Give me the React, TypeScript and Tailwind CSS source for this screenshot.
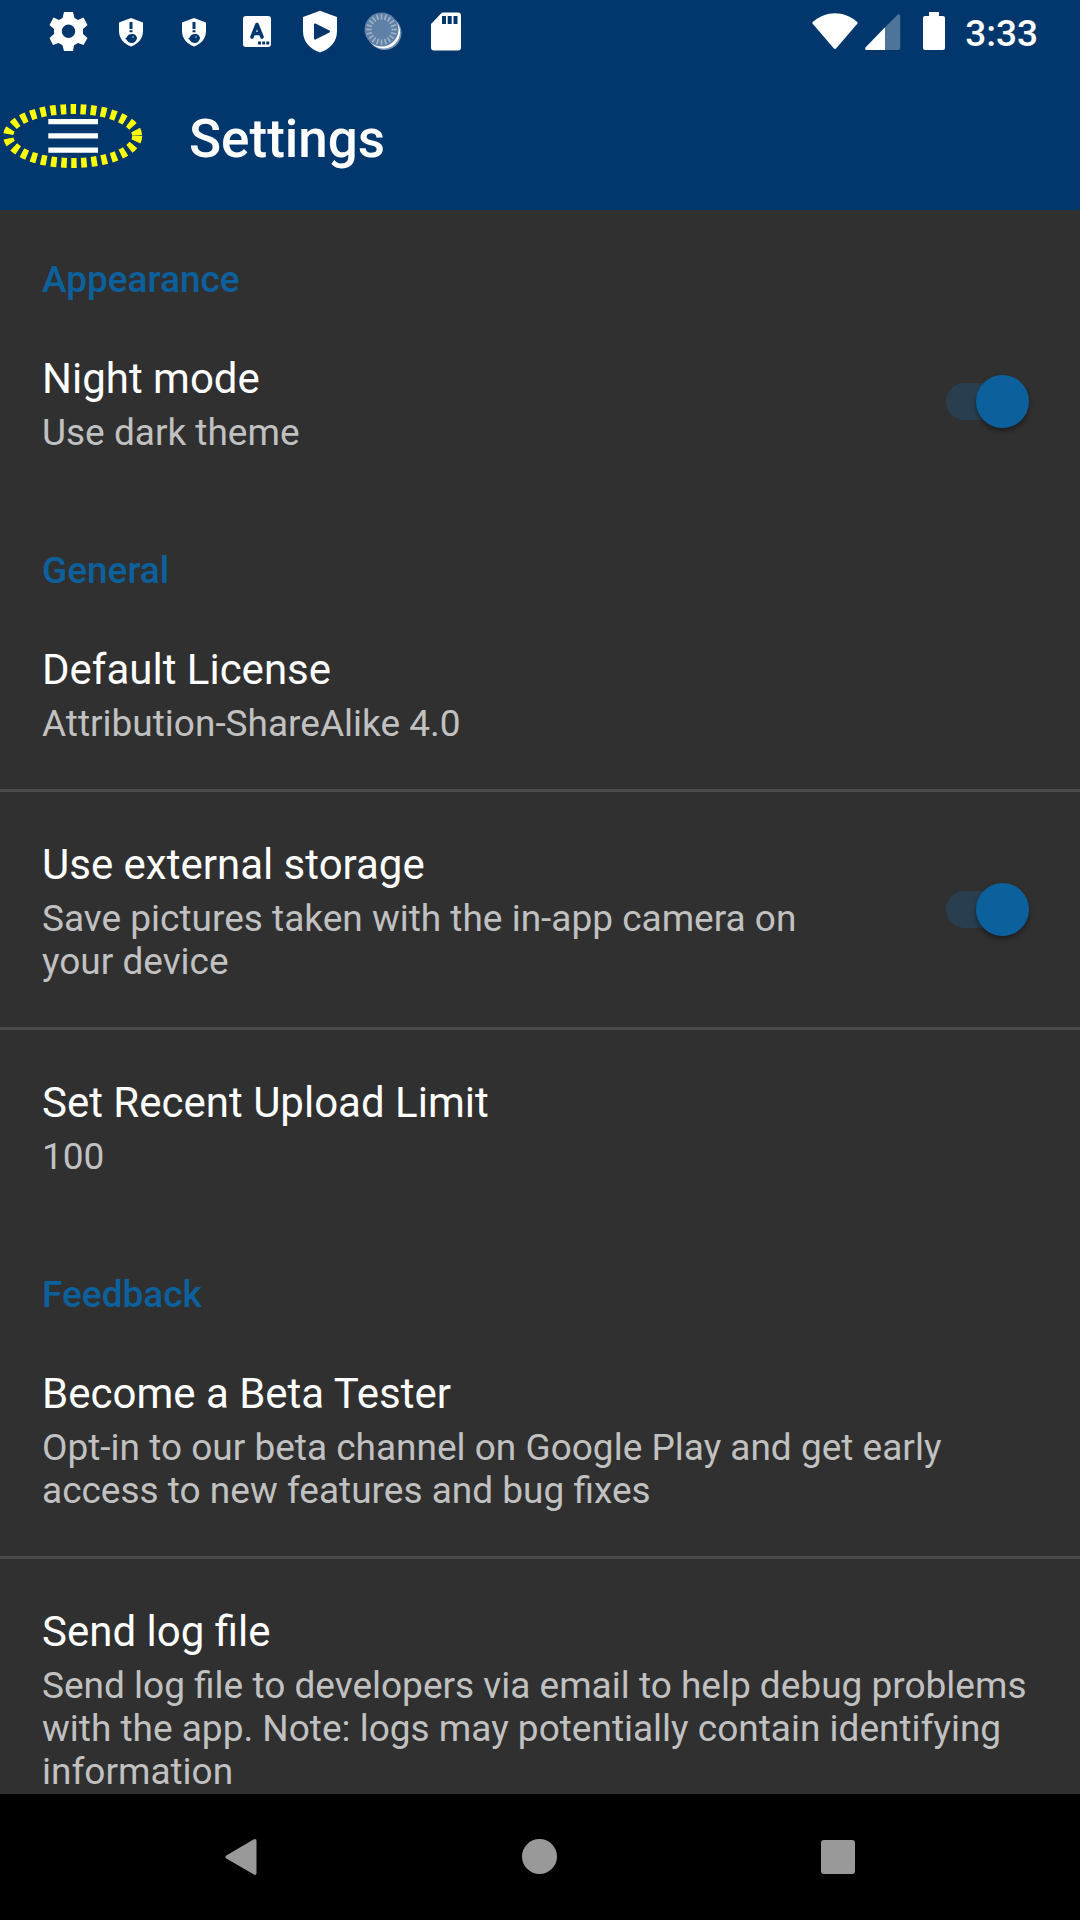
import React from "react";

function Toggle() {
  return (
    <div className="relative mb-[5px] flex h-[53px] w-[84px] shrink-0 items-center">
      <div className="h-[37px] w-[74px] rounded-full bg-[#293f50]" />
      <div className="absolute left-[30px] top-0 h-[53px] w-[53px] rounded-full bg-[#0c609c] shadow-[0_3px_5px_rgba(0,0,0,0.4)]" />
    </div>
  );
}

function Category({ children, first = false }: { children: string; first?: boolean }) {
  return (
    <h2 className={`${first ? "pt-[48px]" : "pt-[51px]"} text-[37px] font-medium leading-[43px] text-[#0c609c]`}>
      <span className="px-[42px]">{children}</span>
    </h2>
  );
}

type RowProps = { title: string; lines: string[]; divider?: boolean; toggle?: boolean };

function Row({ title, lines, divider = false, toggle = false }: RowProps) {
  return (
    <div className={`${divider ? "border-t-[3px] border-[#4a4a4a]" : ""} flex items-center justify-between pb-[44px] pl-[42px] pr-[50px] pt-[48px]`}>
      <div className="whitespace-nowrap">
        <div className="text-[42px] leading-[49px] text-white">{title}</div>
        <div className="mt-[8px] text-[37px] leading-[43px] text-[#c1c1c1]">
          {lines.map((line) => (
            <div key={line}>{line}</div>
          ))}
        </div>
      </div>
      {toggle && <Toggle />}
    </div>
  );
}

function ShieldAlert() {
  return (
    <svg className="h-[30px] w-[26px]" viewBox="0 0 26 30">
      <path fill="#fff" d="M13 1 25 5.5V14c0 7.500-5 13-12 15.500C6 27 1 21.500 1 14V5.500Z" />
      <path fill="#01376d" d="M11.500 5h3v7h-3zM11.500 13.300h3v2h-3zM7 22l1.500-1.500c1-2.500 3-3.500 5.500-3.500 3 0 5 2 5 4.500-1 3-3 4.500-5 4.500-2.500 0-4.500-1-5.500-3.500z" />
      <circle cx="15" cy="20" r=".7" fill="#fff" />
    </svg>
  );
}

function StatusBar() {
  const ticks = Array.from({ length: 20 }, (_, i) => i * 18);
  return (
    <div className="flex h-[63px] items-start pl-[49px]">
      <svg className="mt-[11px] h-[41px] w-[39px]" viewBox="0 0 39 41">
        <path fill="#fff" fillRule="evenodd" d="M15 1h9l1.500 6 3.500 2 5.500-2.500 4 7.500-4.500 4v5l4.500 4-4 7-5.500-2-4 2.300L24 40h-9l-1.500-5.700L9.500 32 4 34 .5 27 5 23v-5L.5 14l4-7.500L10 9l3.500-2ZM19.500 13.500a6.700 6.700 0 1 0 0 13.400 6.700 6.700 0 0 0 0-13.400Z" />
      </svg>
      <div className="ml-[30px] mt-[17px]"><ShieldAlert /></div>
      <div className="ml-[37px] mt-[17px]"><ShieldAlert /></div>
      <div className="relative ml-[36px] mt-[16px] h-[31px] w-[28px] rounded-[3px] bg-white">
        <svg className="h-[31px] w-[28px]" viewBox="0 0 28 31">
          <path fill="none" stroke="#01376d" strokeWidth="3.600" strokeLinecap="round" strokeLinejoin="round" d="m9 21 5-12.500L19 21M11 17.500h6" />
          <path fill="#01376d" d="M15 25.500h3v3h-3zM19.200 25.500h3v3h-3zM23.300 25.500h3v3h-3z" />
        </svg>
      </div>
      <svg className="ml-[31px] mt-[10px] h-[43px] w-[36px]" viewBox="0 0 36 43">
        <path fill="#fff" d="M18 .8 35 7v14c0 11-7 18-17 21.500C8 39 1 32 1 21V7Z" />
        <path fill="#01376d" stroke="#01376d" strokeWidth="2" strokeLinejoin="round" d="M13 14.500 27 21.500 13 28.500Z" />
      </svg>
      <svg className="ml-[26px] mt-[12px] h-[39px] w-[38px]" viewBox="0 0 38 39">
        <circle cx="20.500" cy="21" r="17" fill="#7892b1" />
        <circle cx="19.500" cy="20" r="16.500" fill="#fff" />
        <circle cx="17.500" cy="17.500" r="17" fill="#5f80a7" />
        {ticks.map((a) => (
          <path key={a} d="M17.500 2v5.500" stroke="#a0b3ca" strokeWidth="1.600" transform={`rotate(${a} 17.500 17.500)`} />
        ))}
      </svg>
      <svg className="ml-[28px] mt-[12px] h-[39px] w-[32px]" viewBox="0 0 32 39">
        <path fill="#fff" d="M12 .5h16q3 0 3 3v32q0 3-3 3H4q-3 0-3-3V12Z" />
        <path fill="#01376d" d="M12 4h4v8h-4zM17.700 4h4v8h-4zM23.500 4h4v8h-4z" />
      </svg>
      <div className="ml-auto flex pr-[42px]">
        <svg className="mt-[12px] h-[38px] w-[46px]" viewBox="0 0 46 38">
          <path fill="#fff" d="M.7 10C14-1.800 32-1.800 45.300 10q.7.8 0 1.800L24.300 36.300q-1.300 1.400-2.600 0L.7 11.800q-.7-1 0-1.800Z" />
        </svg>
        <svg className="ml-[7px] mt-[14px] h-[36px] w-[36px]" viewBox="0 0 36 36">
          <path fill="#4f7499" d="M32.500.8q2.700-1.500 2.700 1.500V34q0 2-2 2H20V13.300Z" />
          <path fill="#fff" d="M20 13.300V36H2q-3 0-1.300-2.700Z" />
        </svg>
        <svg className="ml-[22px] mt-[12px] h-[38px] w-[22px]" viewBox="0 0 22 38">
          <path fill="#fff" d="M6 0h10v4h4q2 0 2 2v30q0 2-2 2H2q-2 0-2-2V6q0-2 2-2h4Z" />
        </svg>
        <span className="ml-[20px] mt-[12px] text-[37px] font-medium leading-[44px] text-white">3:33</span>
      </div>
    </div>
  );
}

export default function App() {
  return (
    <div className="flex h-[1920px] w-[1080px] flex-col overflow-hidden bg-[#303030] font-['Roboto',sans-serif]">
      <header className="h-[210px] shrink-0 bg-[#01376d]">
        <StatusBar />
        <div className="flex h-[147px] items-start">
          <svg className="ml-[3px] mt-[40px] h-[66px] w-[140px]" viewBox="0 0 140 66">
            <path fill="#fff" d="M45.300 16h49.700v5.300H45.300zM45.300 30.200h49.700v5.300H45.300zM45.300 44.500h49.700v5.300H45.300z" />
            <ellipse cx="69.700" cy="33" rx="64.500" ry="27" fill="none" stroke="#ff0" strokeWidth="10" strokeDasharray="5.600 4.500" />
          </svg>
          <h1 className="ml-[46px] mt-[45px] text-[53px] font-medium leading-[62px] text-white">Settings</h1>
        </div>
      </header>
      <main className="min-h-0 flex-1 overflow-hidden">
        <Category first>Appearance</Category>
        <div className="pt-[5px]">
          <Row title="Night mode" lines={["Use dark theme"]} toggle />
        </div>
        <Category>General</Category>
        <div className="pt-[5px]">
          <Row title="Default License" lines={["Attribution-ShareAlike 4.0"]} />
        </div>
        <Row divider toggle title="Use external storage" lines={["Save pictures taken with the in-app camera on", "your device"]} />
        <Row divider title="Set Recent Upload Limit" lines={["100"]} />
        <Category>Feedback</Category>
        <div className="pt-[5px]">
          <Row title="Become a Beta Tester" lines={["Opt-in to our beta channel on Google Play and get early", "access to new features and bug fixes"]} />
        </div>
        <Row
          divider
          title="Send log file"
          lines={["Send log file to developers via email to help debug problems", "with the app. Note: logs may potentially contain identifying", "information"]}
        />
      </main>
      <nav className="flex h-[126px] shrink-0 items-start bg-black">
        <svg className="ml-[225px] mt-[44px] h-[38px] w-[32px]" viewBox="0 0 32 38">
          <path fill="#999" d="M28.500 1.500q3-1.500 3 1.500v32q0 3-3 1.300L1.300 20.500q-2-1.500 0-3Z" />
        </svg>
        <div className="ml-[265px] mt-[45px] h-[35px] w-[35px] rounded-full bg-[#999]" />
        <div className="ml-[264px] mt-[46px] h-[34px] w-[34px] rounded-[3px] bg-[#999]" />
      </nav>
    </div>
  );
}
